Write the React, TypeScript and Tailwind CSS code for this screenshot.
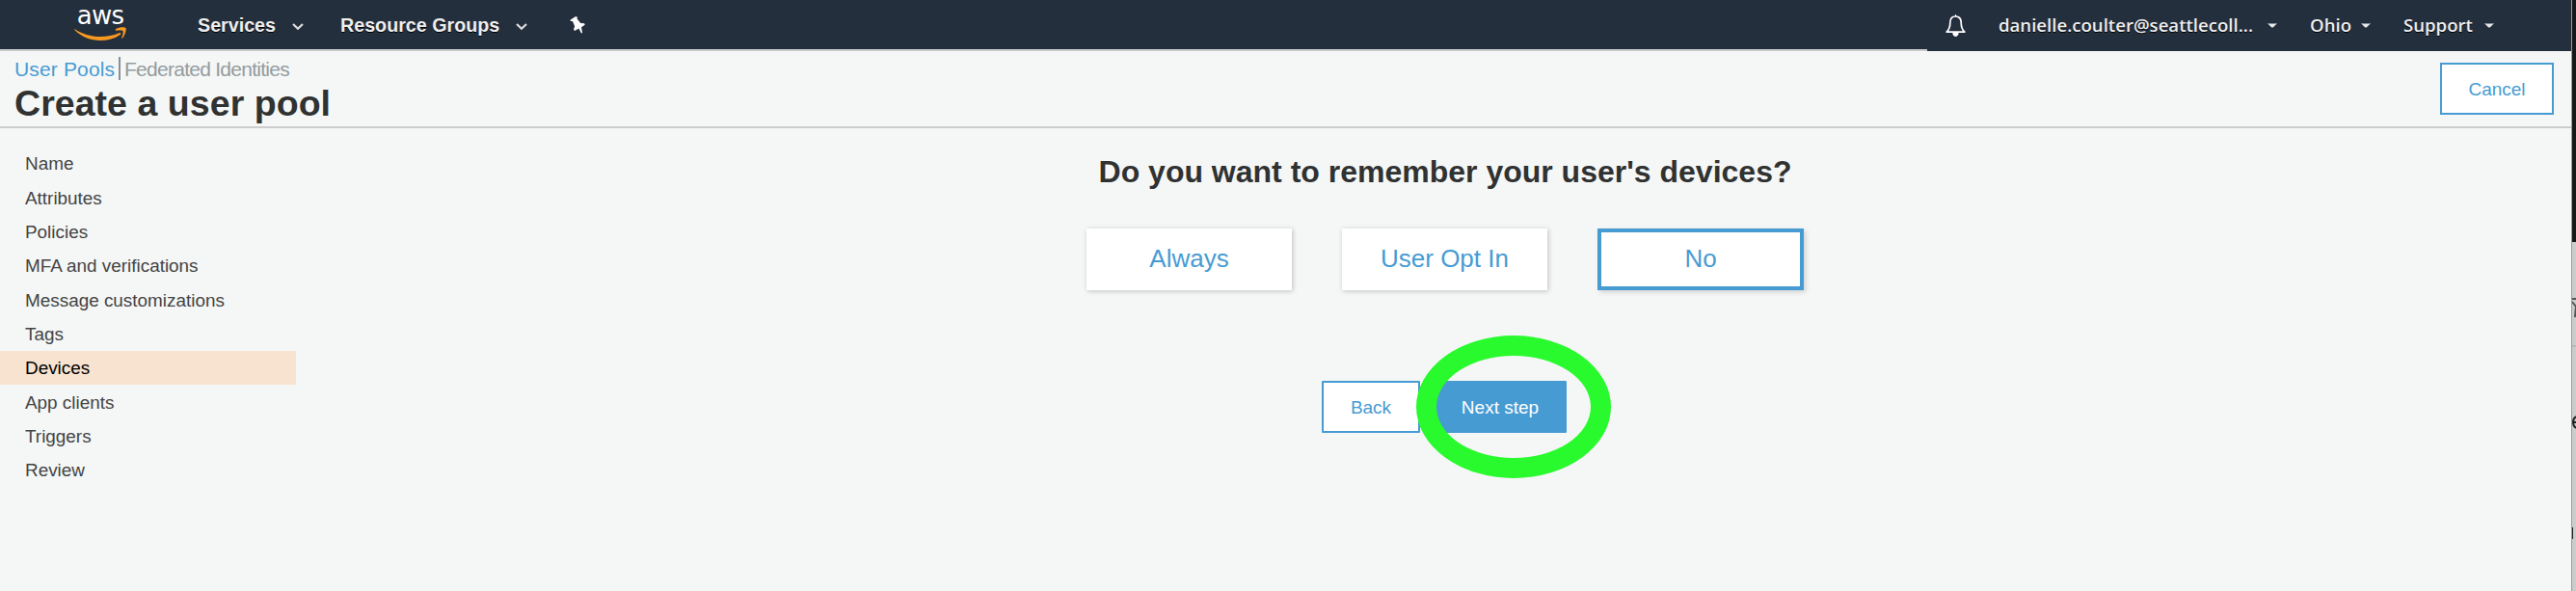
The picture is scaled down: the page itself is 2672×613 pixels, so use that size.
import React from "react";

const steps = ["Name", "Attributes", "Policies", "MFA and verifications", "Message customizations", "Tags", "Devices", "App clients", "Triggers", "Review"];

function Chevron() {
  return (
    <svg className="mt-[4px] h-[8px] w-[12px] shrink-0" viewBox="0 0 12 8">
      <path d="M1 1 6 5.800 11 1" fill="none" stroke="#ddd" strokeWidth="2.200" />
    </svg>
  );
}

function Caret() {
  return (
    <svg className="h-[5px] w-[10px] shrink-0" viewBox="0 0 10 5">
      <path d="M0 0.300 2 0.600h6l2-.3L6 4.200q-1 .6-2 0z" fill="#e8e8e8" />
    </svg>
  );
}

function Logo() {
  return (
    <div className="flex h-[51px] w-[54px] flex-col items-center">
      <span className="h-[28px] font-['DejaVu_Sans',sans-serif] text-[26px] leading-[32px] font-normal tracking-[-0.800px] text-white">aws</span>
      <svg className="h-[14px] w-[54px] shrink-0" viewBox="0 0 54 14">
        <path d="M0.500 2.200C8 7 17 10 27 10c7 0 13.500-1.300 19.500-3.800 1.500-.5 2.500.8 1.200 1.800C42 12 35 14 27 14 17 14 7.500 10 0.500 3.200c-.6-.6-.3-1.200 0-1z" fill="#f7981f" />
        <path d="M43 2.200C46 .2 52.500-.300 53.500 1c.8 1.500-.8 8-3.500 10.500-.6.4-1 .1-.8-.5.8-2 2-5.800 1.300-6.800-.8-1-4.700-.6-7-.4-.8.1-1.100-.9-.5-1.600z" fill="#f7981f" />
      </svg>
    </div>
  );
}

function Option({ label, selected = false }: { label: string; selected?: boolean }) {
  return (
    <button className={selected
      ? "flex h-[64px] w-[214px] justify-center border-4 border-[#479bd3] bg-white pt-[12px] text-[26px] leading-[30px] text-[#479bd3] shadow-[2px_2px_5px_rgba(0,0,0,0.15)]"
      : "flex h-[64px] w-[213px] justify-center bg-white pt-[16px] text-[26px] leading-[30px] text-[#479bd3] shadow-[1px_1px_5px_rgba(0,0,0,0.22)]"}>
      {label}
    </button>
  );
}

export default function App() {
  return (
    <div className="flex h-[613px] w-[2672px] overflow-hidden bg-[#f5f7f6] font-['Liberation_Sans',Arial,sans-serif]">
      <div className="flex w-[2667px] flex-col">
        <header className="flex h-[53px] shrink-0 text-[#eee]">
          <div className="flex h-[53px] w-[1999px] items-center border-b-2 border-[#ccc] bg-[#242f3e] pl-[77px] text-[19.700px] font-bold">
            <Logo />
            <span className="mt-[2px] ml-[74px] w-[98px] [text-shadow:0_1px_0_#000]">Services</span>
            <Chevron />
            <span className="mt-[2px] ml-[38px] w-[182px] whitespace-nowrap [text-shadow:0_1px_0_#000]">Resource Groups</span>
            <Chevron />
            <svg className="mt-[1px] ml-[44px] h-[18px] w-[16px]" viewBox="0 0 18 20">
              <path d="M0.500 4 7 0l2 1-.5 1.800 4.200 5 4.300.2.700 1.800-4.200 2.700 1.200 6.500-1.200.5-3-5.500-4.800 2.800-1.200-1.800 1.300-3.500L3.300 5.500 1 5.500z" fill="#fff" />
            </svg>
          </div>
          <div className="flex w-[668px] items-center bg-[#242f3e] pb-[1px] pl-[19px] font-['Open_Sans',sans-serif] text-[18.600px] font-semibold">
            <svg className="h-[23px] w-[21px]" viewBox="0 0 21 23">
              <path d="M10.500 2C6.500 2 4.800 5 4.800 8.500c0 5-1.300 7.500-3.600 9.700h18.600c-2.300-2.200-3.600-4.700-3.600-9.700C16.200 5 14.500 2 10.500 2z" fill="none" stroke="#fff" strokeWidth="1.700" strokeLinejoin="round" />
              <path d="M10.500 0v2M7.800 19.500h5.400c0 4-5.400 4-5.400 0z" fill="#fff" stroke="#fff" />
            </svg>
            <span className="ml-[34px] w-[279px] whitespace-nowrap [text-shadow:0_1px_0_#000]">danielle.coulter@seattlecoll...</span>
            <Caret />
            <span className="ml-[34px] w-[53px] [text-shadow:0_1px_0_#000]">Ohio</span>
            <Caret />
            <span className="ml-[34px] w-[84px] [text-shadow:0_1px_0_#000]">Support</span>
            <Caret />
          </div>
        </header>
        <div className="flex h-[80px] shrink-0 items-start justify-between border-b-2 border-[#ccc] pr-[18px] pl-[15px]">
          <div className="flex flex-col">
            <div className="mt-[6px] flex h-[24px] items-center text-[21px] leading-[24px]">
              <span className="w-[108px] pt-[2px] tracking-[0.150px] text-[#479bd3]">User Pools</span>
              <span className="h-[24px] w-[2px] bg-[#879196]" />
              <span className="ml-[4px] pt-[2px] tracking-[-0.730px] text-[#949b9e]">Federated Identities</span>
            </div>
            <h1 className="mt-[3px] text-[37.500px] leading-[42px] font-bold tracking-[0.050px] text-[#303232]">Create a user pool</h1>
          </div>
          <button className="mt-[12px] h-[54px] w-[118px] border-2 border-[#479bd3] bg-white pt-[2px] text-[19px] text-[#479bd3]">Cancel</button>
        </div>
        <div className="flex">
          <nav className="flex w-[307px] shrink-0 flex-col pt-[19px]">
            {steps.map((s) => (
              <div key={s} className={s === "Devices"
                ? "flex h-[35.300px] items-center bg-[#f7e3d0] pt-[2px] pl-[26px] text-[18.900px] text-black"
                : "flex h-[35.300px] items-center pt-[2px] pl-[26px] text-[18.900px] text-[#444]"}>{s}</div>
            ))}
          </nav>
          <main className="flex flex-1 flex-col items-center pl-[24px]">
            <h2 className="mt-[27px] text-[32px] leading-[36px] font-bold text-[#303232]">Do you want to remember your user's devices?</h2>
            <div className="mt-[41px] flex gap-[52px]">
              <Option label="Always" />
              <Option label="User Opt In" />
              <Option label="No" selected />
            </div>
            <div className="mt-[94px] mr-[2px] flex gap-[14px]">
              <button className="h-[54px] w-[102px] rounded-[1px] border-2 border-[#479bd3] bg-white pt-[2px] text-[19px] text-[#479bd3]">Back</button>
              <div className="relative">
                <button className="h-[54px] w-[138px] rounded-[1px] bg-[#479bd3] pt-[2px] text-[19px] text-white">Next step</button>
                <div className="absolute top-[-47px] left-[-18px] h-[148px] w-[202px] rounded-[50%] border-[21px] border-[#28fa2d]" />
              </div>
            </div>
          </main>
        </div>
      </div>
      <div className="flex w-[5px] flex-col overflow-hidden border-l border-[#999] bg-[#ccc]">
        <div className="h-[251px] shrink-0 bg-[#151718]" />
        <svg className="mt-[57px] h-[22px] w-[5px] shrink-0" viewBox="0 0 5 22">
          <path d="M0 2h5M0 5l4 5-1 10h2" fill="none" stroke="#555" strokeWidth="2" />
        </svg>
        <div className="mt-[28px] h-[2px] shrink-0 bg-[#b8b8b8]" />
        <svg className="mt-[71px] h-[14px] w-[5px] shrink-0" viewBox="0 0 5 14">
          <path d="M5 1Q1 2 1 7t4 6M1 7h4" fill="none" stroke="#222" strokeWidth="2" />
        </svg>
        <div className="mt-[102px] h-[12px] w-[1px] shrink-0 bg-[#222]" />
      </div>
    </div>
  );
}
